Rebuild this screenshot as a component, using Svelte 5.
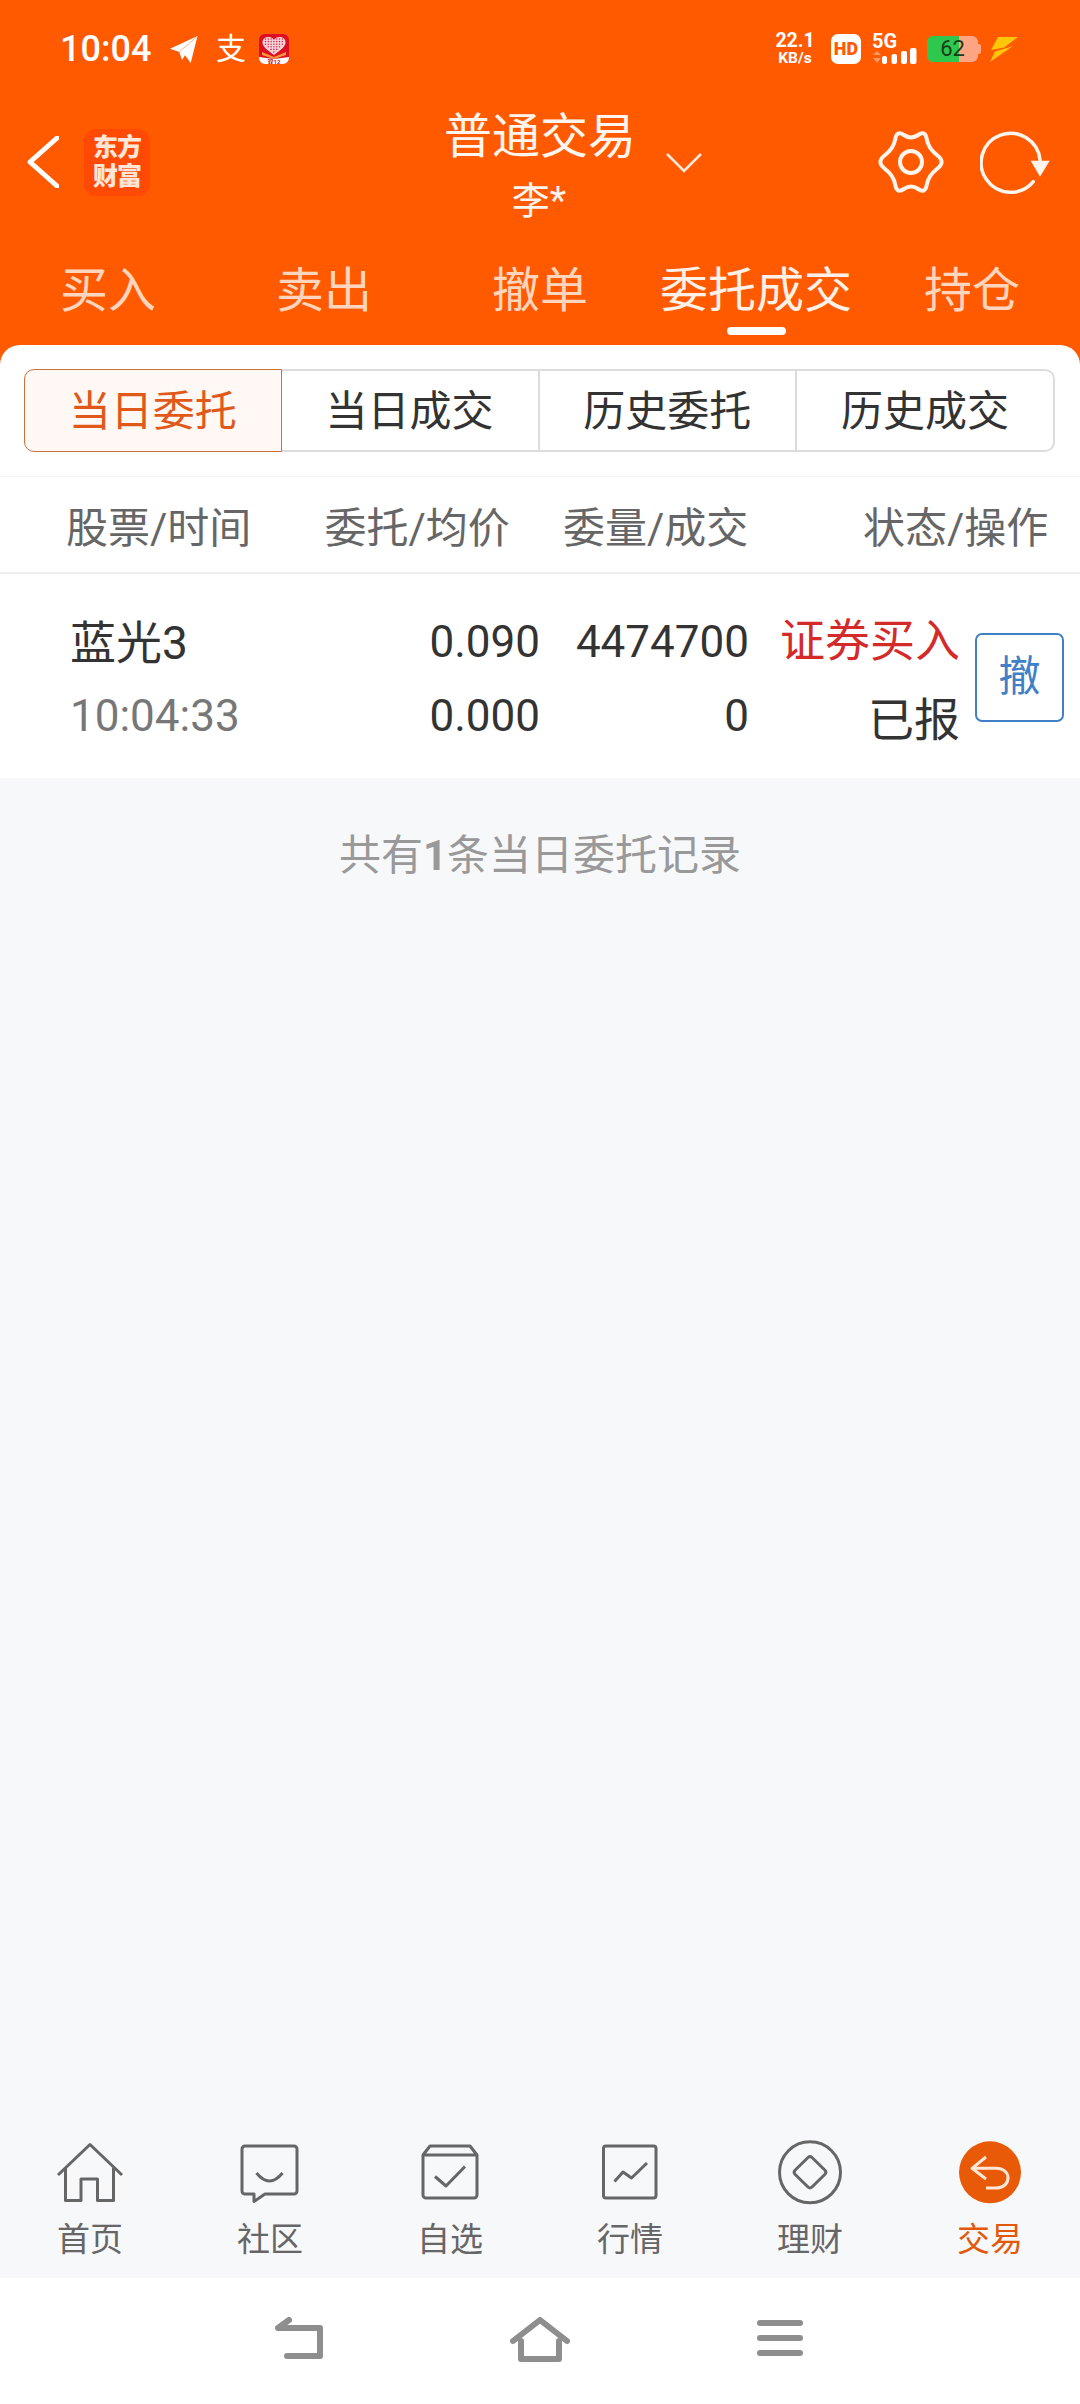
<script>
  const rad = (d) => (d * Math.PI) / 180;
  const gearAngles = [
    [0, 35], [38, 22], [66, 35], [90, 22], [114, 35], [142, 22],
    [180, 35], [218, 22], [246, 35], [270, 22], [294, 35], [322, 22]
  ];
  const gearPts = gearAngles.map(([a, r]) => [33 + r * Math.cos(rad(a)), 32 + r * Math.sin(rad(a))]);
  const mid = (a, b) => [(a[0] + b[0]) / 2, (a[1] + b[1]) / 2];
  const fmt = (p) => `${p[0].toFixed(2)} ${p[1].toFixed(2)}`;
  const gearPath =
    'M' + fmt(mid(gearPts[11], gearPts[0])) +
    gearPts.map((p, i) => `Q${fmt(p)} ${fmt(mid(p, gearPts[(i + 1) % 12]))}`).join('') + 'Z';

  const heartDots = [];
  for (let y = 5; y <= 18; y += 2.6) {
    for (let x = 6.5; x <= 24; x += 2.8) {
      const half = y < 9 ? 11 : 11 - (y - 9) * 1.05;
      if (Math.abs(x - 15) < half - 1 && !(y < 6 && Math.abs(x - 15) < 2)) heartDots.push([x, y]);
    }
  }

  const tabs = [
    { label: '买入' }, { label: '卖出' }, { label: '撤单' },
    { label: '委托成交', active: true }, { label: '持仓' }
  ];
  const segments = ['当日委托', '当日成交', '历史委托', '历史成交'];
  const heads = ['股票/时间', '委托/均价', '委量/成交', '状态/操作'];
</script>

<div class="app">
  <header class="header">
    <div class="status">
      <div class="status-left">
        <span class="time">10:04</span>
        <svg class="plane" viewBox="0 0 28 28" width="28" height="28">
          <path d="M27.500 1 0 13.700 9.300 17 12 25 15 20.300 20.700 28z" fill="#fff" />
          <path d="M9.300 17 27 1.500" stroke="#ffb68f" stroke-width="1" fill="none" />
        </svg>
        <span class="alipay">支</span>
        <svg class="pdd" viewBox="0 0 30 30" width="30" height="30">
          <rect width="30" height="30" rx="6" fill="#dd0f22" />
          <path d="M15 21C10 17 3.500 13 3.500 8.500 3.500 5 6 3 9.500 3c2.500 0 4.500 1 5.500 3 1-2 3-3 5.500-3 3.500 0 6 2 6 5.500C26.500 13 20 17 15 21z" fill="#f9d3da" />
          <g fill="#d0304a">
            {#each heartDots as d}
              <circle cx={d[0]} cy={d[1]} r="0.800" />
            {/each}
          </g>
          <path d="M3 18 15 23 27 18V21L15 25 3 21z" fill="#f59a3c" />
          <path d="M0 23 15 25 30 23V24a6 6 0 0 1-6 6H6a6 6 0 0 1-6-6z" fill="#fff" />
          <text x="15" y="29.500" font-size="6" font-weight="700" text-anchor="middle" fill="#c8102a" font-family="Roboto, 'Noto Sans CJK SC', sans-serif">双12</text>
        </svg>
      </div>
      <div class="status-right">
        <div class="speed"><span class="speed-num">22.1</span><span class="speed-unit">KB/s</span></div>
        <div class="hd">HD</div>
        <svg class="signal" viewBox="0 -4 46 34" width="46" height="34">
          <text x="0" y="14" class="five-g">5G</text>
          <path d="M5 17 9 21H1zM5 29 1 24H9z" fill="#ff9a66" />
          <rect x="10" y="22" width="5" height="8" rx="2" fill="#fff" />
          <rect x="19.500" y="20" width="5.500" height="10" rx="2" fill="#fff" />
          <rect x="29" y="17" width="6" height="13" rx="2" fill="#fff" />
          <rect x="38" y="14" width="6.500" height="16" rx="2" fill="#fff" />
        </svg>
        <div class="battery"><span>62</span></div>
        <svg class="bolt" viewBox="0 0 28 25" width="28" height="25">
          <path d="M8 0H28L14 10.500 1 13z" fill="#ffc60a" />
          <path d="M23 9 0 25 5 14.500z" fill="#ffc60a" />
        </svg>
      </div>
    </div>

    <div class="titlebar">
      <div class="title-left">
        <svg viewBox="0 0 32 52" width="32" height="52">
          <path d="M30 2 3 26 30 50" fill="none" stroke="#fff" stroke-width="5" stroke-linecap="round" stroke-linejoin="round" />
        </svg>
        <div class="logo"><span>东方</span><span>财富</span></div>
      </div>
      <div class="title">
        <div class="title-main">普通交易</div>
        <div class="title-sub">李*</div>
      </div>
      <div class="title-right">
        <svg class="chev" viewBox="0 0 36 20" width="36" height="20">
          <path d="M1 1 18 18 35 1" fill="none" stroke="#ffe9dc" stroke-width="2.500" />
        </svg>
        <svg class="gear" viewBox="0 0 66 64" width="66" height="64">
          <path d={gearPath} fill="none" stroke="#fff5ee" stroke-width="4" stroke-linejoin="round" />
          <circle cx="33" cy="32" r="11" fill="none" stroke="#fff5ee" stroke-width="4" />
        </svg>
        <svg class="refresh" viewBox="0 0 70 64" width="70" height="64">
          <path d="M53.300 51.700A29.500 29.500 0 1 1 60 30" fill="none" stroke="#fff5ee" stroke-width="3.500" stroke-linecap="round" />
          <path d="M50.700 30.700H69.700L60 46.700z" fill="#fff5ee" />
        </svg>
      </div>
    </div>

    <nav class="tabs">
      {#each tabs as tab}
        <div class="tab" class:active={tab.active}>
          <span>{tab.label}</span>
          {#if tab.active}<i class="tab-bar"></i>{/if}
        </div>
      {/each}
    </nav>
  </header>

  <section class="sheet">
    <div class="segments">
      {#each segments as seg, i}
        <div class="seg" class:on={i === 0}>{seg}</div>
      {/each}
    </div>
    <div class="thead">
      {#each heads as h}<span>{h}</span>{/each}
    </div>
    <div class="row">
      <div class="cell name"><span class="stock">蓝光3</span><span class="muted">10:04:33</span></div>
      <div class="cell num"><span>0.090</span><span>0.000</span></div>
      <div class="cell num"><span>4474700</span><span>0</span></div>
      <div class="cell num"><span class="red">证券买入</span><span class="state">已报</span></div>
      <div class="cancel">撤</div>
    </div>
  </section>

  <main class="empty">共有<b>1</b>条当日委托记录</main>

  <footer class="tabbar">
    <div class="item">
      <svg viewBox="0 0 70 70" width="70" height="70">
        <path d="M3 38 35 7.500 67 38M10.500 31V63.500H26V42H42.500V63.500H58.500V31" />
      </svg>
      <span>首页</span>
    </div>
    <div class="item">
      <svg viewBox="0 0 70 70" width="70" height="70">
        <path d="M10 9H59a3 3 0 0 1 3 3V54a3 3 0 0 1-3 3H30L19 64.500V57H10a3 3 0 0 1-3-3V12a3 3 0 0 1 3-3z" />
        <path d="M21.500 36Q34.500 52 47.500 36" />
      </svg>
      <span>社区</span>
    </div>
    <div class="item">
      <svg viewBox="0 0 70 70" width="70" height="70">
        <path d="M15 9H55L62 18V58a3 3 0 0 1-3 3H11a3 3 0 0 1-3-3V18zM8 18H62M20 39.500 31 49 50 29.500" />
      </svg>
      <span>自选</span>
    </div>
    <div class="item">
      <svg viewBox="0 0 70 70" width="70" height="70">
        <rect x="8.500" y="9" width="52.500" height="52" rx="2.500" />
        <path d="M19.500 44.500 28 35 36.500 41 52 26" />
      </svg>
      <span>行情</span>
    </div>
    <div class="item">
      <svg viewBox="0 0 70 70" width="70" height="70">
        <circle cx="35" cy="35.300" r="30.500" />
        <path d="M33 20.500a3 3 0 0 1 4 0L50 33.300a3 3 0 0 1 0 4L37 50a3 3 0 0 1-4 0L20 37.300a3 3 0 0 1 0-4z" />
      </svg>
      <span>理财</span>
    </div>
    <div class="item sel">
      <svg viewBox="0 0 70 70" width="70" height="70">
        <circle class="disc" cx="35" cy="35.300" r="31" />
        <path class="glyph" d="M31 20 17 31.300 31 42M17 31.300H41C48 31.300 53 35 53 41S48 51 41 51H31" />
      </svg>
      <span>交易</span>
    </div>
  </footer>

  <div class="sysnav">
    <div class="sys">
      <svg viewBox="0 0 50 44" width="50" height="44">
        <path d="M14 3 3 11H45V39H12" />
      </svg>
    </div>
    <div class="sys">
      <svg viewBox="0 0 60 46" width="60" height="46">
        <path d="M3 24 30 3 57 24M11 24V42H49V24" />
      </svg>
    </div>
    <div class="sys">
      <svg viewBox="0 0 50 44" width="50" height="44">
        <path d="M5 6H45M5 21H45M5 36H45" />
      </svg>
    </div>
  </div>
</div>

<style>
  :global(body) {
    margin: 0;
    background: #f7f8fa;
  }

  .app {
    width: 1080px;
    height: 2404px;
    display: flex;
    flex-direction: column;
    overflow: hidden;
    font-family: Roboto, "Noto Sans CJK SC", sans-serif;
    color: #333;
  }

  .header {
    background: #ff5a00;
    padding-bottom: 24px;
    flex: none;
  }

  .status {
    height: 98px;
    padding: 0 62px 0 60px;
    display: flex;
    align-items: center;
    justify-content: space-between;
    color: #fff;
  }

  .status-left,
  .status-right {
    display: flex;
    align-items: center;
  }

  .time {
    font-size: 36px;
    font-weight: 500;
    line-height: 40px;
    width: 93px;
  }

  .plane {
    margin-left: 17px;
  }

  .alipay {
    margin-left: 18px;
    width: 28px;
    font-size: 30px;
    line-height: 30px;
    text-align: center;
  }

  .pdd {
    margin-left: 15px;
  }

  .speed {
    width: 42px;
    display: flex;
    flex-direction: column;
    align-items: center;
    font-weight: 700;
    color: #fff;
  }

  .speed-num {
    font-size: 19.500px;
    line-height: 18px;
  }

  .speed-unit {
    font-size: 15.500px;
    line-height: 16px;
  }

  .hd {
    margin-left: 15px;
    width: 30px;
    height: 30px;
    border-radius: 7px;
    background: #fff;
    color: #ff5a00;
    font-size: 18px;
    font-weight: 900;
    line-height: 30px;
    text-align: center;
  }

  .signal {
    margin: -4px 0 0 11px;
  }

  .five-g {
    font-size: 20px;
    font-weight: 700;
    fill: #fff;
  }

  .battery {
    position: relative;
    margin-left: 9px;
    width: 51px;
    height: 26px;
    border-radius: 6px;
    background: linear-gradient(90deg, #2dc84d 0 32px, #ffa583 32px);
    text-align: center;
    font-size: 22px;
    line-height: 26px;
    color: #163d1c;
  }

  .battery::after {
    content: "";
    position: absolute;
    left: 51px;
    top: 8px;
    width: 3px;
    height: 10px;
    border-radius: 0 2px 2px 0;
    background: #ffa583;
  }

  .bolt {
    margin-left: 12px;
  }

  .titlebar {
    height: 128px;
    display: flex;
    align-items: center;
  }

  .title-left {
    width: 444px;
    padding-left: 27px;
    box-sizing: border-box;
    display: flex;
    align-items: center;
    gap: 25px;
  }

  .logo {
    width: 66px;
    height: 67px;
    border-radius: 12px;
    background: #ff4a05;
    color: #ffe6d8;
    display: flex;
    flex-direction: column;
    align-items: center;
    justify-content: center;
    font-size: 25px;
    font-weight: 900;
    line-height: 29px;
    letter-spacing: -1px;
  }

  .title {
    width: 190px;
    align-self: flex-start;
    padding-top: 9px;
    color: #fff5ef;
    text-align: center;
  }

  .title-main {
    font-size: 48px;
    line-height: 60px;
    white-space: nowrap;
  }

  .title-sub {
    margin-top: 4px;
    font-size: 38px;
    line-height: 60px;
  }

  .title-right {
    flex: 1;
    padding: 0 30px 0 32px;
    display: flex;
    align-items: center;
  }

  .chev {
    margin-top: 2px;
  }

  .gear {
    margin-left: auto;
    overflow: visible;
  }

  .refresh {
    margin-left: 36px;
  }

  .tabs {
    height: 119px;
    display: flex;
  }

  .tab {
    width: 216px;
    padding-top: 41px;
    box-sizing: border-box;
    display: flex;
    flex-direction: column;
    align-items: center;
    font-size: 48px;
    line-height: 48px;
    color: #ffd5bd;
    white-space: nowrap;
  }

  .tab.active {
    color: #fff1e8;
  }

  .tab-bar {
    display: block;
    width: 59px;
    height: 8px;
    margin-top: 12px;
    border-radius: 4px;
    background: #fff;
  }

  .sheet {
    margin-top: -24px;
    flex: none;
    border-radius: 20px 20px 0 0;
    background: #fff;
  }

  .segments {
    padding: 24px 25px 24px 24px;
    height: 83px;
    display: grid;
    grid-template-columns: repeat(4, 1fr);
    grid-template-rows: 83px;
  }

  .seg {
    border: 2px solid #dcdcdc;
    border-left-width: 0;
    box-sizing: border-box;
    text-align: center;
    font-size: 42px;
    line-height: 82px;
    color: #333;
  }

  .seg:last-child {
    border-radius: 0 10px 10px 0;
  }

  .seg.on {
    border: 1.500px solid #c9713c;
    border-radius: 10px 0 0 10px;
    background: #fff8f4;
    color: #e0591a;
    line-height: 83px;
  }

  .thead {
    height: 98px;
    box-sizing: border-box;
    padding-left: 66px;
    display: grid;
    grid-template-columns: 258.500px 238.500px 300px 1fr;
    align-items: center;
    border-top: 1px solid #f2f2f2;
    border-bottom: 2px solid #eeeeee;
    font-size: 42px;
    color: #666;
  }

  .row {
    height: 204px;
    box-sizing: border-box;
    padding: 30px 0 26px 70px;
    display: grid;
    grid-template-columns: 200px 270px 209px 211px 1fr;
    align-items: center;
    font-size: 44px;
  }

  .cell {
    display: flex;
    flex-direction: column;
    line-height: 74px;
    white-space: nowrap;
  }

  .num {
    align-items: flex-end;
  }

  .stock {
    font-size: 46px;
    padding-top: 2px;
  }

  .muted {
    color: #777;
    margin-top: -1px;
  }

  .red {
    color: #d42a2a;
    font-size: 45px;
  }

  .state {
    font-size: 46px;
    padding-top: 4px;
    margin-bottom: -4px;
  }

  .cancel {
    margin: -3px 0 0 15px;
    width: 89px;
    height: 89px;
    box-sizing: border-box;
    border: 2.500px solid #3f80c6;
    border-radius: 7px;
    color: #3f80c6;
    font-size: 42px;
    line-height: 84px;
    text-align: center;
  }

  .empty {
    flex: 1;
    padding-top: 50px;
    background: #f7f8fa;
    text-align: center;
    font-size: 42px;
    line-height: 56px;
    color: #999;
  }

  .empty b {
    font-weight: 700;
  }

  .tabbar {
    flex: none;
    height: 141px;
    display: flex;
    background: #f7f8fa;
  }

  .item {
    width: 180px;
    display: flex;
    flex-direction: column;
    align-items: center;
    font-size: 33px;
    line-height: 40px;
    color: #666;
  }

  .item span {
    margin-top: 13px;
  }

  .item svg {
    fill: none;
    stroke: #666;
    stroke-width: 3;
    stroke-linejoin: round;
    display: block;
  }

  .item.sel {
    color: #e2590c;
  }

  .item.sel .disc {
    fill: #e85a07;
    stroke: none;
  }

  .item.sel .glyph {
    stroke: #ffe6d6;
    stroke-width: 3;
  }

  .sysnav {
    flex: none;
    height: 126px;
    padding-top: 39px;
    box-sizing: border-box;
    display: flex;
    justify-content: center;
    background: #fff;
  }

  .sys {
    width: 240px;
    display: flex;
    justify-content: center;
  }

  .sys svg {
    fill: none;
    stroke: #8e8e8e;
    stroke-width: 6;
    stroke-linecap: round;
    stroke-linejoin: round;
  }
</style>
